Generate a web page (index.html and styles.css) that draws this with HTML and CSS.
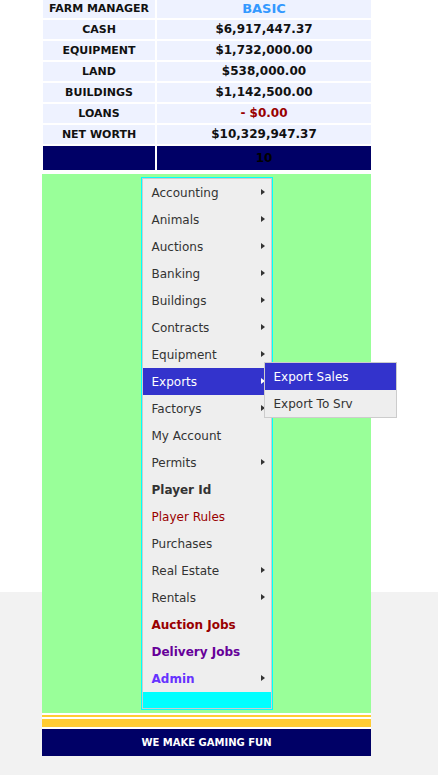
FILE: index.html
```html
<html>

<head>
  <meta charset="utf8">
  <title>Farm Manager</title>
  <link rel="stylesheet" href="styles.css">
</head>

<body>
  <div class="page">
    <div class="stats">
      <div class="label">FARM MANAGER</div>
      <div class="value basic">BASIC</div>
      <div class="label">CASH</div>
      <div class="value">$6,917,447.37</div>
      <div class="label">EQUIPMENT</div>
      <div class="value">$1,732,000.00</div>
      <div class="label">LAND</div>
      <div class="value">$538,000.00</div>
      <div class="label">BUILDINGS</div>
      <div class="value">$1,142,500.00</div>
      <div class="label">LOANS</div>
      <div class="value loan">- $0.00</div>
      <div class="label">NET WORTH</div>
      <div class="value">$10,329,947.37</div>
      <div class="label dark"></div>
      <div class="value dark">10</div>
    </div>

    <div class="field">
      <div class="menu">
        <ul>
          <li class="sub">Accounting</li>
          <li class="sub">Animals</li>
          <li class="sub">Auctions</li>
          <li class="sub">Banking</li>
          <li class="sub">Buildings</li>
          <li class="sub">Contracts</li>
          <li class="sub">Equipment</li>
          <li class="sub active">Exports
            <ul class="popup">
              <li class="active">Export Sales</li>
              <li>Export To Srv</li>
            </ul>
          </li>
          <li class="sub">Factorys</li>
          <li>My Account</li>
          <li class="sub">Permits</li>
          <li class="bold">Player Id</li>
          <li class="rules">Player Rules</li>
          <li>Purchases</li>
          <li class="sub">Real Estate</li>
          <li class="sub">Rentals</li>
          <li class="bold jobs">Auction Jobs</li>
          <li class="bold delivery">Delivery Jobs</li>
          <li class="sub bold admin">Admin</li>
        </ul>
        <div class="bar"></div>
      </div>
    </div>

    <div class="stripe thin"></div>
    <div class="stripe thick"></div>
    <div class="footer">WE MAKE GAMING FUN</div>
  </div>
</body>

</html>
```

FILE: styles.css
```css
body {
  margin: 0;
  font: 12px "DejaVu Sans", Verdana, sans-serif;
  color: #333;
  background: linear-gradient(#FFF 592px, #F2F2F2 592px);
}

.page {
  width: 329px;
  margin-left: 42px;
  background: #FFF;
}

/* stats table */

.stats {
  display: grid;
  grid-template-columns: 112px 214px;
  grid-template-rows: repeat(7, 19px) 24px;
  gap: 2px;
  padding-left: 1px;
  margin-top: -1px;
}

.stats div {
  background: #EEF2FF;
  color: #111;
  font-weight: bold;
  text-align: center;
  line-height: 19px;
}

.stats .label {
  font-size: 11px;
}

.stats .value {
  font-size: 12px;
}

.stats .basic {
  color: #3399FF;
  font-size: 13px;
}

.stats .loan {
  color: #990000;
}

.stats .dark {
  background: #000066;
  color: #000;
  line-height: 25px;
}

/* menu area */

.field {
  margin-top: 4px;
  padding: 3px 0;
  background: #99FF99;
}

.menu {
  width: 130px;
  margin: 0 auto;
  border: 1px solid #00FFFF;
  background: #EEE;
}

.menu ul {
  list-style: none;
  margin: 0;
  padding: 0;
}

.menu > ul {
  border: 1px solid #CCC;
  border-bottom: 0;
}

.menu li {
  position: relative;
  height: 27px;
  line-height: 29px;
  padding-left: 9px;
  white-space: nowrap;
}

.menu li.sub::after {
  content: "";
  position: absolute;
  right: 6px;
  top: 10px;
  border-left: 4px solid #333;
  border-top: 3.5px solid transparent;
  border-bottom: 3.5px solid transparent;
}

.menu li.active {
  background: #3333CC;
  color: #FFF;
}

.menu li.active::after {
  border-left-color: #FFF;
}

.menu .bold {
  font-weight: bold;
}

.menu .rules {
  color: #990000;
}

.menu .jobs {
  color: #990000;
}

.menu .delivery {
  color: #660099;
}

.menu .admin {
  color: #6633FF;
}

.menu .popup {
  position: absolute;
  top: -6px;
  left: 121px;
  width: 131px;
  border: 1px solid #CCC;
  background: #EEE;
  color: #333;
  z-index: 2;
}

.menu .popup li {
  padding-left: 9px;
}

.bar {
  height: 16px;
  background: #00FFFF;
  border: 1px solid #CCC;
  border-top: 0;
}

/* footer */

.stripe {
  background: #FFCC33;
  margin-top: 2px;
}

.thin {
  height: 2px;
}

.thick {
  height: 8px;
}

.footer {
  margin-top: 2px;
  height: 27px;
  line-height: 28px;
  background: #000066;
  color: #FFF;
  font-size: 10px;
  font-weight: bold;
  text-align: center;
}
```
